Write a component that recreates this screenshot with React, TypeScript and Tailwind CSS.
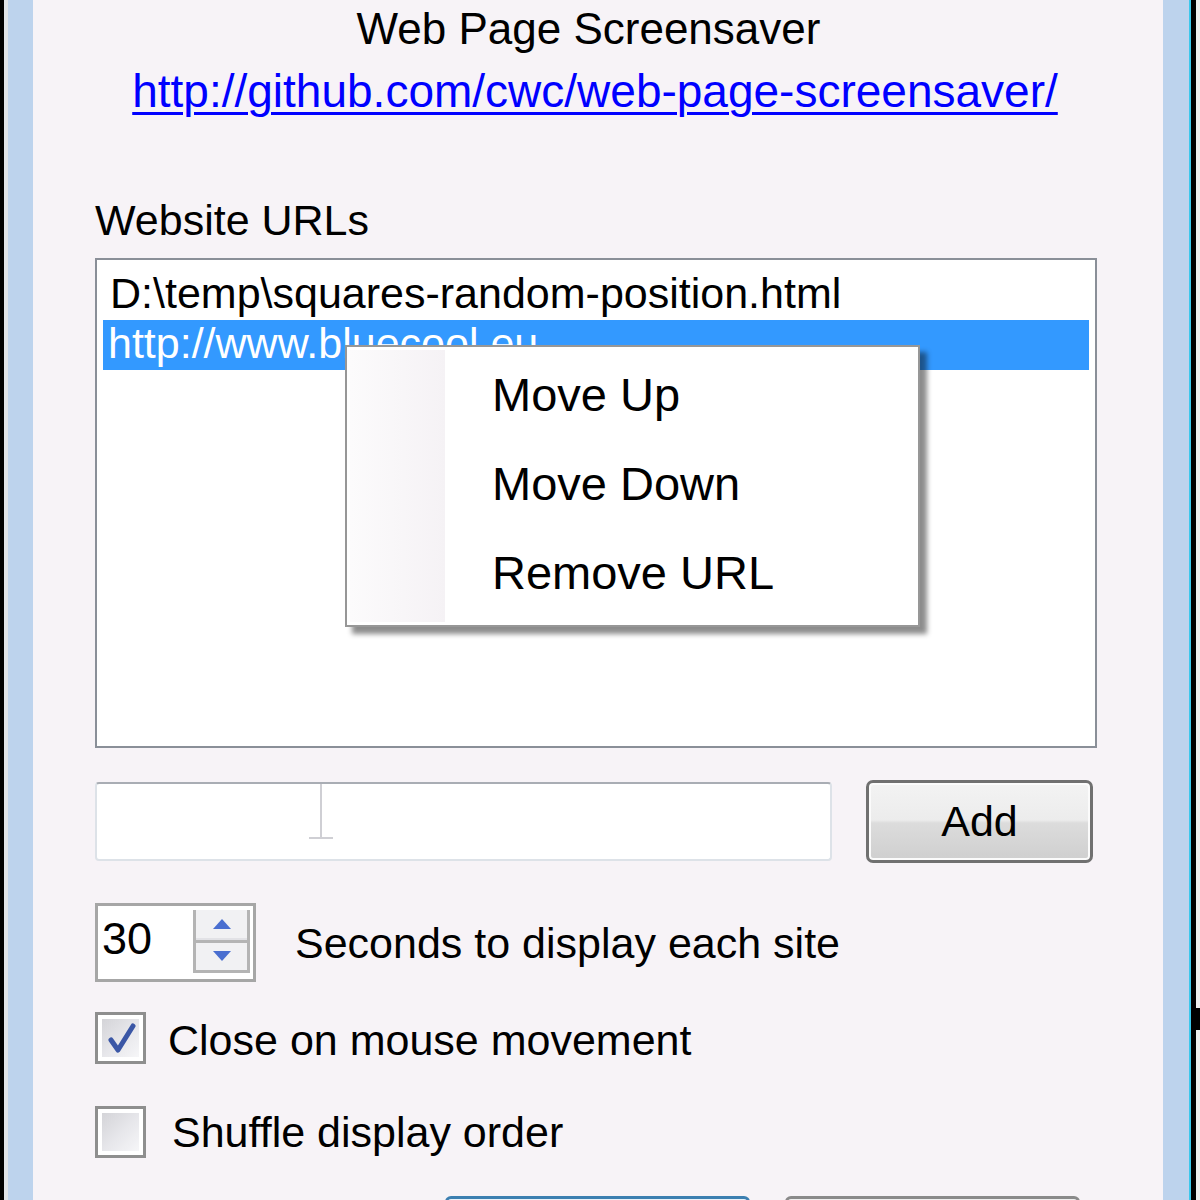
import React from "react";

function CheckBox({ checked }: { checked: boolean }) {
  return (
    <div className="w-[51px] h-[52px] shrink-0 border-[3px] border-[#8e8e8e] bg-white p-[4px]">
      <div className="relative w-full h-full bg-[linear-gradient(135deg,#d4d4d8_0%,#e6e6ea_50%,#f6f6f8_100%)]">
        {checked && (
          <svg className="absolute inset-0" width="38" height="39" viewBox="0 0 38 39">
            <path
              d="M9 21 L16 31 L31 7"
              fill="none"
              stroke="#3b57a6"
              strokeWidth="5"
              strokeLinecap="round"
              strokeLinejoin="round"
            />
          </svg>
        )}
      </div>
    </div>
  );
}

export default function App() {
  return (
    <div className="relative w-[1200px] h-[1200px] overflow-hidden flex bg-black font-['Liberation_Sans',Arial,sans-serif] text-black">
      {/* left frame */}
      <div className="w-[4px] shrink-0 bg-black" />
      <div className="w-[4px] shrink-0 bg-[#dfe3e8]" />
      <div className="w-[25px] shrink-0 bg-[#bdd3ed]" />

      {/* dialog client area */}
      <div className="w-[1130px] shrink-0 bg-[#f7f3f7] flex flex-col *:shrink-0">
        <div className="mt-[7px] h-[44px] leading-[44px] text-[44px] text-center pr-[19px] whitespace-nowrap">
          Web Page Screensaver
        </div>
        <div className="mt-[17px] h-[46px] leading-[46px] text-[46px] text-center pr-[6px] whitespace-nowrap">
          <span className="text-[#0000ff] underline decoration-[3px] underline-offset-[5px]">
            http://github.com/cwc/web-page-screensaver/
          </span>
        </div>

        <div className="ml-[62px] mt-[84px] h-[44px] leading-[44px] text-[43px] whitespace-nowrap">
          Website URLs
        </div>

        {/* list box */}
        <div className="relative ml-[62px] mt-[16px] w-[1002px] h-[490px] border-2 border-[#8a8f98] bg-white pt-[10px] px-[6px]">
          <div className="h-[50px] leading-[46px] text-[43px] pl-[7px] whitespace-nowrap">
            D:\temp\squares-random-position.html
          </div>
          <div className="h-[50px] leading-[46px] text-[43px] pl-[5px] bg-[#3399ff] text-white whitespace-nowrap">
            http://www.bluecool.eu
          </div>

          {/* context menu */}
          <div className="absolute left-[248px] top-[85px] w-[575px] h-[282px] border-2 border-[#979797] bg-white pt-[4px] shadow-[7px_7px_5px_rgba(0,0,0,0.45)]">
            <div className="absolute left-[3px] top-[3px] bottom-[3px] w-[95px] bg-[linear-gradient(to_right,#fcfbfc,#f5f2f5)]" />
            {["Move Up", "Move Down", "Remove URL"].map((t) => (
              <div
                key={t}
                className="relative h-[89px] flex items-center pl-[145px] text-[47px] whitespace-nowrap"
              >
                {t}
              </div>
            ))}
          </div>
        </div>

        {/* textbox + Add */}
        <div className="ml-[62px] mt-[32px] h-[83px] flex items-center">
          <div className="relative w-[737px] h-[79px] rounded-[4px] border-2 border-[#dde2e8] border-t-[#a9adb4] bg-white">
            <svg className="absolute left-[208px] top-0" width="32" height="60" viewBox="0 0 32 60">
              <path d="M16 0 V54 M4 54 H28" stroke="#cfcfd4" strokeWidth="2" fill="none" />
            </svg>
          </div>
          <div className="ml-[34px] w-[227px] h-[83px] rounded-[7px] border-[3px] border-[#707070] shadow-[inset_0_0_0_2px_#fbfbfb] bg-[linear-gradient(to_bottom,#f3f3f3_0%,#ececec_48%,#dcdcdc_52%,#cfcfcf_100%)] flex items-center justify-center text-[43px]">
            Add
          </div>
        </div>

        {/* spinner */}
        <div className="ml-[62px] mt-[40px] h-[79px] flex items-center">
          <div className="relative w-[161px] h-[79px] border-[3px] border-[#a6a6a6] bg-white pl-[4px] pt-[10px]">
            <div className="h-[46px] leading-[46px] text-[45px]">30</div>
            <div className="absolute right-[3px] top-[4px] bottom-[6px] w-[57px] border-x-[3px] border-b-[3px] border-[#b4b4b4] flex flex-col bg-white">
              <div className="flex-1 bg-[#f1f1f3] border-b-[2px] border-[#e2e2e6] flex items-center justify-center">
                <svg width="18" height="10" viewBox="0 0 18 10">
                  <path d="M9 0 L18 10 H0 Z" fill="#4a6fd0" />
                </svg>
              </div>
              <div className="flex-1 bg-[#f1f1f3] border-t-[3px] border-[#b4b4b4] flex items-center justify-center">
                <svg width="18" height="10" viewBox="0 0 18 10">
                  <path d="M0 0 H18 L9 10 Z" fill="#4a6fd0" />
                </svg>
              </div>
            </div>
          </div>
          <div className="ml-[39px] text-[43px] leading-[44px] whitespace-nowrap">
            Seconds to display each site
          </div>
        </div>

        {/* checkboxes */}
        <div className="ml-[62px] mt-[30px] flex items-center">
          <CheckBox checked />
          <div className="ml-[22px] mt-[3px] text-[43px] leading-[44px] whitespace-nowrap">
            Close on mouse movement
          </div>
        </div>
        <div className="ml-[62px] mt-[42px] flex items-center">
          <CheckBox checked={false} />
          <div className="ml-[26px] text-[43px] leading-[44px] whitespace-nowrap">
            Shuffle display order
          </div>
        </div>

        {/* bottom buttons (cut off) */}
        <div className="mt-[38px] flex">
          <div className="ml-[412px] w-[305px] h-[30px] rounded-t-[6px] border-[3px] border-[#3c7fb1] bg-[#e8f2fa]" />
          <div className="ml-[35px] w-[295px] h-[30px] rounded-t-[6px] border-[3px] border-[#8a8a8a] bg-[#efefef]" />
        </div>
      </div>

      {/* right frame */}
      <div className="w-[26px] shrink-0 bg-[#bdd3ed]" />
      <div className="w-[2px] shrink-0 bg-[#3cc8ec]" />
      <div className="w-[5px] shrink-0 bg-black" />
      <div className="w-[4px] shrink-0 bg-[#eeeeee]" />

      <div className="absolute left-[1195px] top-[1008px] w-[5px] h-[22px] bg-black" />
    </div>
  );
}
